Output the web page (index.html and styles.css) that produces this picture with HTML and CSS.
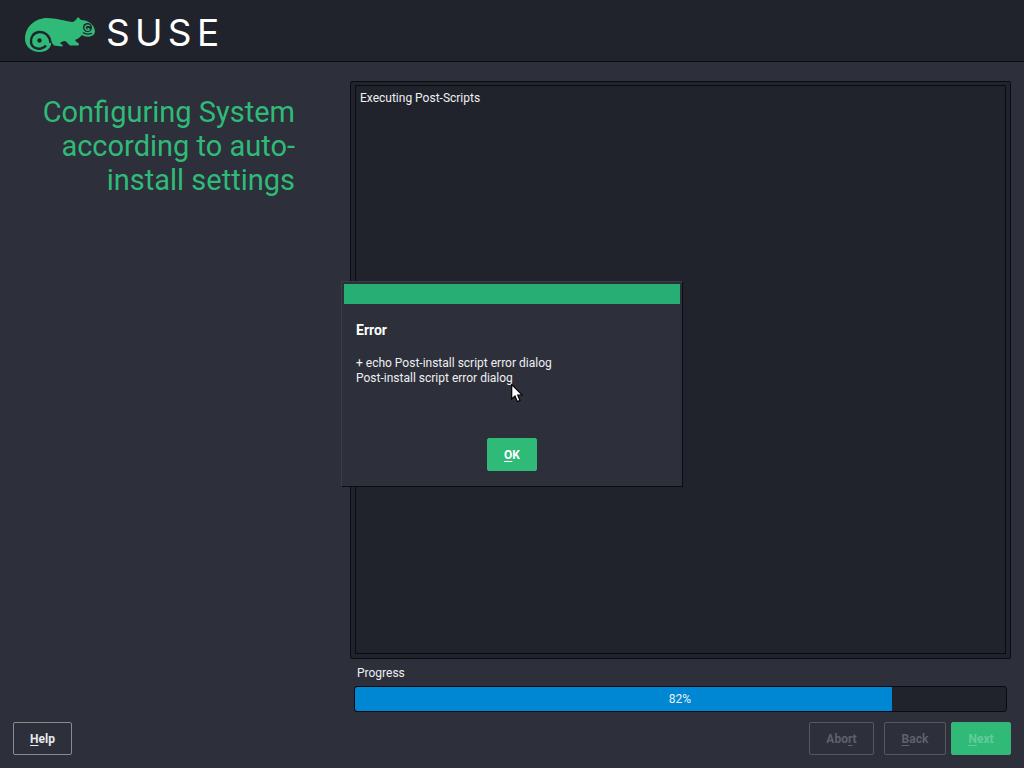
FILE: index.html
```html
<!DOCTYPE html>
<html lang="en">
<head>
  <meta charset="UTF-8" />
  <title>SUSE Installer</title>
  <link rel="stylesheet" href="styles.css">
</head>
<body>
  <header class="topbar">
    <svg class="logo" viewBox="25 16 72 38" width="72" height="38" aria-hidden="true">
      <path class="logo-body" d="M25 39C25 27 35 18 47 18C56 18 65 21 72 22C74 22 76 20 78 17C79 18 80 19 81 20C88 20 94 24 95 31C95 34 93 36 90 36.500C87 37 84 36.500 82 35C80 37 78 39 75 40C76 42 78 43 79 43.500L78.500 45.500L70 45.500C68 44 67 42 65 41C63 41 61 42 60 43C61 44 62 44.500 63 45L62 46.500L54 45.500C53 44 52 43 51 42C52 48 46 52 40 52C31 52 25 46 25 39Z"/>
      <path class="logo-cut" d="M50.500 43C50 36 45 31.500 39 32C33.500 32.500 30.500 37 31 42.500C31.500 47 36 49.500 41 48.500C43 48 45 47 46 45.500"/>
      <circle class="logo-dot" cx="39.500" cy="40.500" r="2.200"/>
      <circle class="logo-eye" cx="87.500" cy="27.500" r="4.500"/>
      <path class="logo-pupil" d="M90 26C88.500 24.500 85.500 25 85 27.500C84.800 30 88 31 89.500 29.500L87.500 28"/>
      <path class="logo-mouth" d="M83 32.500C85 34 89 34.300 92 33.200"/>
    </svg>
    <span class="wordmark">SUSE</span>
  </header>

  <main class="main">
    <aside class="side">
      <h1 class="side-title">Configuring System according to auto-install settings</h1>
    </aside>
    <section class="content">
      <div class="frame">
        <div class="log">Executing Post-Scripts</div>
      </div>
      <div class="progress-label">Progress</div>
      <div class="progress">
        <div class="progress-fill" style="width: 82.5%"></div>
        <span class="progress-text">82%</span>
      </div>
    </section>
  </main>

  <footer class="footer">
    <button class="btn btn-help"><u>H</u>elp</button>
    <div class="footer-right">
      <button class="btn btn-off btn-abort">Abo<u>r</u>t</button>
      <button class="btn btn-off btn-back"><u>B</u>ack</button>
      <button class="btn btn-next"><u>N</u>ext</button>
    </div>
  </footer>

  <div class="dialog">
    <div class="dialog-bar"></div>
    <div class="dialog-body">
      <h2 class="dialog-title">Error</h2>
      <p class="dialog-text">+ echo Post-install script error dialog<br>Post-install script error dialog</p>
      <div class="dialog-actions">
        <button class="btn btn-ok"><u>O</u>K</button>
      </div>
    </div>
  </div>

  <svg class="cursor" viewBox="0 0 12 19" width="12" height="19" aria-hidden="true">
    <path d="M0.700 0.700V15L4 12L6.300 17.500L9 16.400L6.700 11.200H11.200Z"/>
  </svg>
</body>
</html>
```

FILE: styles.css
```css
* {
  box-sizing: border-box;
}
body {
  margin: 0;
  height: 768px;
  overflow: hidden;
  display: flex;
  flex-direction: column;
  background: #2d2f3a;
  color: #eef0f2;
  font-family: Roboto, sans-serif;
  font-size: 12px;
}
u {
  text-underline-offset: 2px;
}

.topbar {
  height: 62px;
  flex: none;
  display: flex;
  align-items: flex-start;
  padding: 16px 0 0 25px;
  background: #20232c;
  border-bottom: 1px solid #0b0c10;
}
.logo-body {
  fill: #30ba78;
}
.logo-cut {
  fill: none;
  stroke: #20232c;
  stroke-width: 2.400;
}
.logo-dot {
  fill: #20232c;
}
.logo-eye {
  fill: #20232c;
}
.logo-pupil {
  fill: none;
  stroke: #30ba78;
  stroke-width: 1.400;
}
.logo-mouth {
  fill: none;
  stroke: #20232c;
  stroke-width: 1.200;
}
.wordmark {
  margin: -3px 0 0 9px;
  font-family: Inter, sans-serif;
  font-size: 37px;
  line-height: 40px;
  letter-spacing: 5.300px;
  color: #fff;
}

.main {
  flex: 1;
  display: flex;
  min-height: 0;
}
.side {
  width: 350px;
  flex: none;
  padding: 33px 55px 0 20px;
}
.side-title {
  margin: 0;
  font-size: 29px;
  font-weight: 400;
  line-height: 34px;
  text-align: right;
  color: #30ba78;
}
.content {
  flex: 1;
  display: flex;
  flex-direction: column;
  padding: 19px 13px 0 0;
}
.frame {
  height: 578px;
  padding: 3px 4px 4px;
  background: #20232c;
  border: 1px solid #0b0c10;
  border-radius: 2px;
}
.log {
  height: 100%;
  padding: 5px 4px;
  background: #20232c;
  border: 1px solid #0b0c10;
  line-height: 14px;
}
.progress-label {
  margin: 7px 0 0 7px;
  line-height: 14px;
}
.progress {
  position: relative;
  height: 26px;
  margin: 6px 4px 0;
  overflow: hidden;
  background: #20232c;
  border: 1px solid #0b0c10;
  border-radius: 3px;
}
.progress-fill {
  height: 100%;
  background: #0087d4;
  border-radius: 2px 0 0 2px;
}
.progress-text {
  position: absolute;
  inset: 0;
  padding-right: 1px;
  text-align: center;
  line-height: 25px;
  color: #eef0f2;
}

.footer {
  flex: none;
  height: 46px;
  display: flex;
  justify-content: space-between;
  padding: 0 13px;
}
.footer-right {
  display: flex;
}
.btn {
  height: 33px;
  padding: 0;
  background: transparent;
  border: 1px solid #8a8b91;
  border-radius: 2px;
  color: #e8eaee;
  font-family: Roboto, sans-serif;
  font-size: 12px;
  font-weight: 700;
}
.btn-help {
  width: 59px;
}
.btn-off {
  border-color: #565862;
  color: #5f616b;
}
.btn-abort {
  width: 65px;
  margin-right: 10px;
}
.btn-back {
  width: 62px;
  margin-right: 5px;
}
.btn-next {
  width: 60px;
  background: #30ba78;
  border-color: #3fb07c;
  color: #63cc99;
}

.dialog {
  position: absolute;
  left: 341px;
  top: 281px;
  width: 342px;
  height: 206px;
  padding: 2px;
  background: #2d2f3a;
  border: 1px solid #3c3d42;
  border-right-color: #0b0c10;
  border-bottom-color: #0b0c10;
}
.dialog-bar {
  height: 20px;
  background: #27ae74;
}
.dialog-body {
  padding: 18px 12px 0;
}
.dialog-title {
  margin: 0;
  font-size: 14px;
  font-weight: 700;
  line-height: 16px;
  color: #fff;
}
.dialog-text {
  margin: 18px 0 0;
  line-height: 15px;
}
.dialog-actions {
  display: flex;
  justify-content: center;
  margin-top: 52px;
}
.btn-ok {
  width: 50px;
  background: #30ba78;
  border-color: #30ba78;
  color: #fff;
}

.cursor {
  position: absolute;
  left: 511px;
  top: 384px;
}
.cursor path {
  fill: #fff;
  stroke: #000;
  stroke-width: 1.200;
}
```
